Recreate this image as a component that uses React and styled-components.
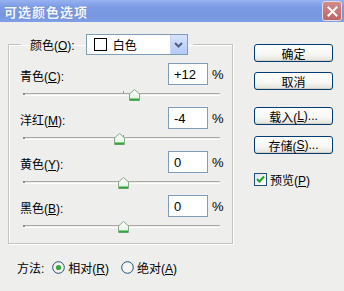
import React from 'react';
import styled, { createGlobalStyle } from 'styled-components';

const GlobalStyle = createGlobalStyle`
  html, body {
    margin: 0;
    padding: 0;
    background: #eeeeec;
  }
  body {
    font-family: "Liberation Sans", "Noto Sans CJK SC", sans-serif;
    font-size: 12px;
    color: #000;
  }
`;

const Window = styled.div`
  width: 344px;
  height: 291px;
  background: #eeeeec;
  display: flex;
  flex-direction: column;
  overflow: hidden;
`;

const TitleBar = styled.div`
  height: 22px;
  flex: none;
  display: flex;
  align-items: center;
  justify-content: space-between;
  padding: 0 2px 0 4px;
  background: linear-gradient(to bottom, #97b2f0 0%, #7d9ce4 30%, #7696e0 70%, #7e9ee6 100%);
  box-sizing: border-box;
`;

const Title = styled.div`
  color: #f2f5ff;
  font-weight: bold;
  font-size: 13px;
  letter-spacing: 1px;
  text-shadow: 0 0 1px #5a74b8;
`;

const CloseButton = styled.div`
  width: 20px;
  height: 20px;
  border-radius: 3px;
  border: 1px solid #e6d9e6;
  background: linear-gradient(to bottom, #d08c8c, #bf6464);
  display: flex;
  align-items: center;
  justify-content: center;
  box-sizing: border-box;
`;

const Body = styled.div`
  display: flex;
  padding: 12px 0 0 8px;
`;

const LeftColumn = styled.div`
  display: flex;
  flex-direction: column;
`;

const GroupBox = styled.fieldset`
  width: 225px;
  height: 210px;
  margin: 0;
  padding: 8px 8px 0 11px;
  box-sizing: border-box;
  border: 1px solid #c3c3c3;
  box-shadow: inset 1px 1px 0 #ffffff, 1px 1px 0 #ffffff;
`;

const Legend = styled.legend`
  margin-left: 1px;
  padding: 0 5px 0 9px;
  display: flex;
  align-items: center;
  gap: 11px;
`;

const Select = styled.div`
  width: 102px;
  height: 21px;
  box-sizing: border-box;
  border: 1px solid #7f9db9;
  background: #fff;
  display: flex;
  align-items: center;
  padding-left: 7px;
`;

const Swatch = styled.span`
  width: 13px;
  height: 13px;
  box-sizing: border-box;
  border: 1px solid #000;
  background: ${p => p.color};
  margin-right: 6px;
`;

const SelectText = styled.span`
  flex: 1;
`;

const DropButton = styled.span`
  width: 16px;
  height: 19px;
  background: linear-gradient(to bottom, #d7e3fd, #b4c9f6);
  border-left: 1px solid #c8d6f6;
  display: flex;
  align-items: center;
  justify-content: center;
`;

const SliderGroup = styled.div`
  display: flex;
  flex-direction: column;
`;

const HeaderRow = styled.div`
  display: flex;
  align-items: center;
  height: 22px;
`;

const Label = styled.span`
  flex: 1;
  padding-top: 3px;
`;

const NumberBox = styled.div`
  width: 40px;
  height: 22px;
  box-sizing: border-box;
  border: 1px solid #7f9db9;
  background: #fff;
  padding-left: 5px;
  display: flex;
  align-items: center;
  font-size: 13px;
`;

const Percent = styled.span`
  width: 12px;
  margin-left: 4px;
  font-size: 13px;
`;

const SliderArea = styled.div`
  position: relative;
  height: 22px;
  margin-left: 3px;
  width: 197px;
`;

const Track = styled.div`
  position: absolute;
  left: 0;
  right: 0;
  top: 8px;
  height: 1px;
  border-top: 1px solid #a9a9a2;
  border-bottom: 1px solid #ffffff;
  border-radius: 1px;
`;

const TrackEnd = styled.div`
  position: absolute;
  left: 0;
  top: 8px;
  width: 2px;
  height: 2px;
  background: #8a8a84;
`;

const Tick = styled.div`
  position: absolute;
  left: 100px;
  top: 6px;
  width: 1px;
  height: 3px;
  background: #9a9a94;
`;

const Thumb = styled.svg`
  position: absolute;
  top: 4px;
`;

const MethodRow = styled.div`
  display: flex;
  align-items: center;
  margin: 15px 0 0 9px;
  height: 16px;
`;

const MethodLabel = styled.span`
  margin-right: 8px;
`;

const RadioItem = styled.label`
  display: flex;
  align-items: center;
  gap: 3px;
  margin-right: 12px;
`;

const RightColumn = styled.div`
  display: flex;
  flex-direction: column;
  margin-left: 21px;
  padding-top: 10px;
`;

const Button = styled.div`
  width: 79px;
  height: 18px;
  box-sizing: border-box;
  border: 1px solid #003c74;
  border-radius: 3px;
  background: linear-gradient(to bottom, #ffffff 0%, #f6f6f3 60%, #e3e2da 100%);
  box-shadow: inset 0 -1px 0 #d6d0c5;
  display: flex;
  align-items: center;
  justify-content: center;
  margin-top: ${p => p.gap || 0}px;
  font-size: 12px;
`;

const CheckRow = styled.label`
  display: flex;
  align-items: center;
  gap: 3px;
  margin-top: 17px;
`;

const CheckBox = styled.span`
  width: 13px;
  height: 13px;
  box-sizing: border-box;
  border: 1px solid #1c5180;
  background: linear-gradient(135deg, #e6e6e0, #ffffff);
  display: flex;
  align-items: center;
  justify-content: center;
`;

const Thumbnail = ({ value }) => {
  const center = 100 + value * 0.98;
  return (
    <Thumb width="11" height="12" viewBox="0 0 11 12" style={{ left: center - 5.5 }}>
      <defs>
        <linearGradient id="tg" x1="0" y1="0" x2="0" y2="1">
          <stop offset="0" stopColor="#ffffff" />
          <stop offset="1" stopColor="#dff2df" />
        </linearGradient>
      </defs>
      <path d="M5.5 0.5 L10.5 5 L10.5 11.5 L0.5 11.5 L0.5 5 Z" fill="url(#tg)" stroke="#86a886" strokeWidth="1" />
      <rect x="1" y="9.5" width="9" height="2" fill="#2fa83a" />
    </Thumb>
  );
};

const Radio = ({ checked }) => (
  <svg width="13" height="13" viewBox="0 0 13 13">
    <circle cx="6.5" cy="6.5" r="5.8" fill="#f4f4f0" stroke="#1c5180" strokeWidth="1" />
    {checked && <circle cx="6.5" cy="6.5" r="2.6" fill="#3aa53a" />}
  </svg>
);

const sliders = [
  { name: '青色', key: 'C', value: 12, text: '+12' },
  { name: '洋红', key: 'M', value: -4, text: '-4' },
  { name: '黄色', key: 'Y', value: 0, text: '0' },
  { name: '黑色', key: 'B', value: 0, text: '0' },
];

export default function App() {
  return (
    <Window>
      <GlobalStyle />
      <TitleBar>
        <Title>可选颜色选项</Title>
        <CloseButton>
          <svg width="11" height="11" viewBox="0 0 11 11">
            <path d="M1.5 1.5 L9.5 9.5 M9.5 1.5 L1.5 9.5" stroke="#fff" strokeWidth="2" strokeLinecap="square" />
          </svg>
        </CloseButton>
      </TitleBar>
      <Body>
        <LeftColumn>
          <GroupBox>
            <Legend>
              <span>颜色(<u>O</u>):</span>
              <Select>
                <Swatch color="#ffffff" />
                <SelectText>白色</SelectText>
                <DropButton>
                  <svg width="9" height="6" viewBox="0 0 9 6">
                    <path d="M1 1 L4.5 4.5 L8 1" fill="none" stroke="#4d6185" strokeWidth="2" />
                  </svg>
                </DropButton>
              </Select>
            </Legend>
            {sliders.map(s => (
              <SliderGroup key={s.key}>
                <HeaderRow>
                  <Label>{s.name}(<u>{s.key}</u>):</Label>
                  <NumberBox>{s.text}</NumberBox>
                  <Percent>%</Percent>
                </HeaderRow>
                <SliderArea>
                  <Track />
                  <TrackEnd />
                  <Tick />
                  <Thumbnail value={s.value} />
                </SliderArea>
              </SliderGroup>
            ))}
          </GroupBox>
          <MethodRow>
            <MethodLabel>方法:</MethodLabel>
            <RadioItem>
              <Radio checked />
              <span>相对(<u>R</u>)</span>
            </RadioItem>
            <RadioItem>
              <Radio />
              <span>绝对(<u>A</u>)</span>
            </RadioItem>
          </MethodRow>
        </LeftColumn>
        <RightColumn>
          <Button>确定</Button>
          <Button gap={10}>取消</Button>
          <Button gap={17}>载入(<u>L</u>)...</Button>
          <Button gap={11}>存储(<u>S</u>)...</Button>
          <CheckRow>
            <CheckBox>
              <svg width="9" height="9" viewBox="0 0 9 9">
                <path d="M1 4 L3.5 6.5 L8 1.5" fill="none" stroke="#21a121" strokeWidth="2" />
              </svg>
            </CheckBox>
            <span>预览(<u>P</u>)</span>
          </CheckRow>
        </RightColumn>
      </Body>
    </Window>
  );
}
